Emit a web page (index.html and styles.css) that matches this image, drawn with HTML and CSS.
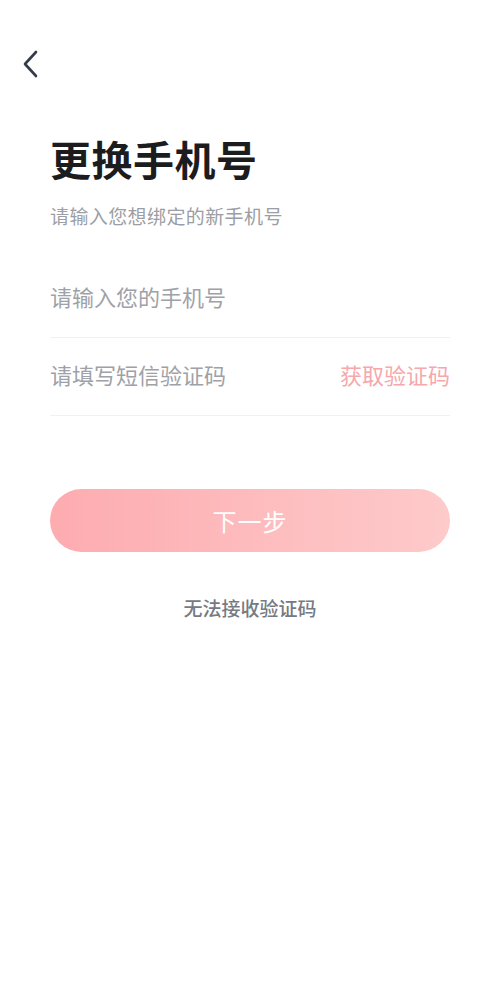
FILE: index.html
```html
<!DOCTYPE html>
<html lang="zh-CN">
<head>
    <meta charset="UTF-8">
    <meta name="viewport" content="width=device-width, initial-scale=1.0">
    <title>更换手机号</title>
    <link rel="stylesheet" href="styles.css">
</head>
<body>
    <div class="page">
        <!-- Top bar -->
        <div class="topbar">
            <a class="back" href="#">
                <svg width="16" height="28" viewBox="0 0 16 28">
                    <path d="M14 2 L3 14 L14 26" fill="none" stroke="#343b4a" stroke-width="2.6" stroke-linecap="round" stroke-linejoin="round"/>
                </svg>
            </a>
        </div>

        <div class="content">
            <h1 class="title">更换手机号</h1>
            <p class="subtitle">请输入您想绑定的新手机号</p>

            <form class="form">
                <div class="row">
                    <input type="tel" class="field" placeholder="请输入您的手机号">
                </div>
                <div class="row">
                    <input type="text" class="field" placeholder="请填写短信验证码">
                    <a class="get-code" href="#">获取验证码</a>
                </div>
                <button type="submit" class="next">下一步</button>
            </form>

            <a class="no-code" href="#">无法接收验证码</a>
        </div>
    </div>
</body>
</html>
```

FILE: styles.css
```css
/* General Body Styles */
body {
    margin: 0;
    padding: 0;
    background: #ffffff;
    font-family: 'Noto Sans CJK SC', 'Noto Sans', sans-serif;
}

.page {
    min-height: 1000px;
}

/* Top bar */
.topbar {
    height: 100px;
    padding-left: 22px;
    padding-top: 50px;
    box-sizing: border-box;
}

.back {
    display: inline-block;
    line-height: 0;
}

/* Main content */
.content {
    padding: 0 50px;
}

.title {
    margin: 33px 0 0;
    font-size: 41px;
    line-height: 50px;
    font-weight: 700;
    color: #1c1c1e;
    letter-spacing: 0.5px;
}

.subtitle {
    margin: 18px 0 0;
    font-size: 19px;
    line-height: 30px;
    color: #9b9ea4;
    letter-spacing: 0.4px;
}

/* Form */
.form {
    display: flex;
    flex-direction: column;
    margin-top: 29px;
}

.row {
    display: flex;
    align-items: center;
    box-sizing: border-box;
    height: 78px;
    padding-bottom: 6px;
    border-bottom: 1px solid #f1f1f3;
}

.field {
    flex: 1;
    min-width: 0;
    border: none;
    outline: none;
    padding: 0;
    background: transparent;
    font-family: inherit;
    font-size: 22px;
    color: #333;
}

.field::placeholder {
    color: #9ea2a8;
}

.get-code {
    font-size: 22px;
    color: #f6a8ad;
    text-decoration: none;
}

/* Button */
.next {
    margin-top: 73px;
    height: 63px;
    border: none;
    border-radius: 32px;
    background: linear-gradient(90deg, #fdacb0, #fecaca);
    color: #ffffff;
    font-family: inherit;
    font-size: 24px;
    letter-spacing: 1px;
    cursor: pointer;
}

.no-code {
    display: block;
    margin-top: 42px;
    text-align: center;
    font-size: 19px;
    font-weight: 500;
    color: #767a82;
    text-decoration: none;
}
```
